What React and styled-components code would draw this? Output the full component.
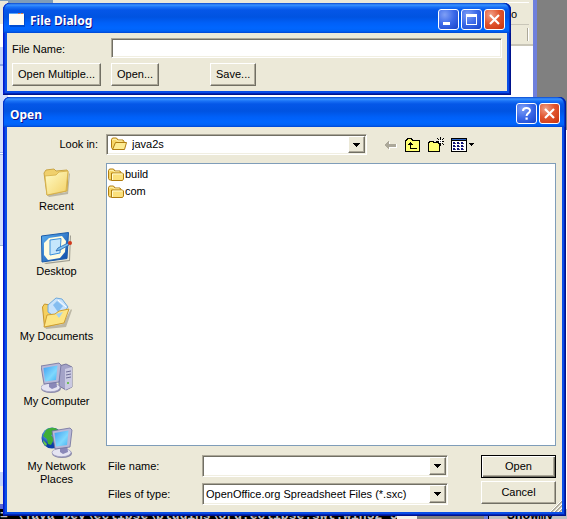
import React, { useState } from 'react';
import styled, { createGlobalStyle, css } from 'styled-components';

const GlobalStyle = createGlobalStyle`
  * {
    box-sizing: border-box;
  }

  body {
    margin: 0;
    overflow: hidden;
    background: #ece9d8;
    color: #000;
    font-family: Tahoma, "Liberation Sans", sans-serif;
    font-size: 11px;
    line-height: 13px;
  }

  button, input, select {
    font: inherit;
    color: inherit;
    border-radius: 0;
  }

  svg {
    display: block;
    flex: none;
  }
`;

const Desktop = styled.div`
  position: relative;
  display: flex;
  flex-direction: column;
  gap: 2px;
  height: 100vh;
  padding: 3px 1px 3px 3px;
  overflow: hidden;
`;

/* ---------- what shows behind the dialogs ---------- */

const Backdrop = styled.div`
  position: absolute;
  inset: 0;
  z-index: 0;
  display: flex;
  flex-direction: column;
`;

const Behind = styled.div`
  flex: 1;
  display: flex;
  background: #fff;
`;

const LeftStrip = styled.div`
  width: 8px;
  background: linear-gradient(
    #7f9db9 0 1px, #ece9d8 1px 24px, #fff 24px 47px, #c2d3fc 47px 64px,
    #8ba3e6 64px 66px, #d3defb 66px 152px, #9cb4ee 152px 153px,
    #fff 153px 154px, #9cb4ee 154px 155px, #d3defb 155px 245px,
    #9db8d8 245px 246px, #fff 246px 472px, #c2d3fc 472px 486px,
    #ece9d8 486px 504px, #5a66d0 504px
  );
`;

const BehindMain = styled.div`
  flex: 1;
  height: 3px;
  background: linear-gradient(90deg, #7f9db9 45px, #ece9d8 45px);
`;

const BehindTools = styled.div`
  width: 28px;
  height: 46px;
  display: flex;
  flex-direction: column;
  align-items: flex-end;
  padding: 2px 4px 0 0;
  background: #ece9d8;
  border-bottom: 2px solid #c9c6b8;
`;

const BehindLetter = styled.span`
  width: 100%;
  height: 23px;
  padding: 5px 12px 0 0;
  text-align: right;
  line-height: 13px;
  border-bottom: 1px solid #c9c6b8;
  border-top: 1px solid #fff;
`;

const BehindSeparator = styled.i`
  width: 2px;
  height: 13px;
  margin-top: 3px;
  background: #aca899;
  border-right: 1px solid #fff;
`;

const BehindEdge = styled.div`
  width: 34px;
  height: 130px;
  background: #808080;
  border-left: 4px solid #6f80dc;
`;

const Console = styled.div`
  display: flex;
  height: 10px;
  line-height: 14px;
  overflow: hidden;
  font-family: "Liberation Mono", monospace;
  font-size: 13px;
  font-weight: bold;
  white-space: pre;
`;

const ConsoleText = styled.span`
  width: 397px;
  background: #000;
  color: #c0c0c0;
`;

const ConsoleGap = styled.span`
  flex: 1;
  background: linear-gradient(90deg, #f4f1ea 20px, #808080 20px);
  border-right: 4px solid #6f80dc;
`;

const ConsoleSide = styled.span`
  width: 79px;
  padding-left: 18px;
  background: #c0c0c0;
  border-left: 1px solid #000;
`;

/* ---------- window frame ---------- */

const WindowFrame = styled.section`
  position: relative;
  z-index: 1;
  display: flex;
  flex-direction: column;
  padding: 0 4px 4px;
  background: #0a4ee6;
  border-radius: 7px 7px 0 0;
  box-shadow: inset -1px -1px #00138c, inset 1px 0 #0019cf,
    inset -2px -2px #0025b8, inset 2px 0 #0831d9;
  ${(p) => (p.$grow ? css`flex: 1; min-height: 0;` : css`margin-right: 55px;`)}
`;

const TitleBar = styled.header`
  display: flex;
  align-items: center;
  gap: 2px;
  height: 30px;
  margin: 0 -4px;
  padding: 3px 6px 0 ${(p) => (p.$icon ? '6px' : '7px')};
  border-radius: 7px 7px 0 0;
  background: linear-gradient(
    #0a48cf 0, #3a93ff 2px, #1a72f6 4px, #0557e8 7px, #0053e1 14px,
    #0060f8 20px, #0066ff 25px, #0062f6 28px, #0046d2 30px
  );
  box-shadow: inset 1px 0 #0030c8, inset -1px 0 #001a9c, inset -2px 0 #0038cc;
`;

const TitleText = styled.h1`
  flex: 1;
  margin: 0;
  padding: 2px 0 0 ${(p) => (p.$icon ? '3px' : '0')};
  color: #fff;
  font-family: "Trebuchet MS", "Noto Sans", sans-serif;
  font-size: 12px;
  font-weight: bold;
  line-height: 18px;
  text-shadow: 1px 1px #0f1089;
`;

const TitleButton = styled.button`
  width: 21px;
  height: 21px;
  padding: 0;
  border: 1px solid #fff;
  border-radius: 3px;
  background: ${(p) =>
    p.$close
      ? 'radial-gradient(circle at 30% 25%, #f0a088, #e2562f 45%, #c8320f)'
      : 'radial-gradient(circle at 30% 25%, #7f9ff5, #3a68e8 50%, #1743c8)'};
`;

const Body = styled.div`
  background: #ece9d8;
`;

/* ---------- controls ---------- */

const sunken = css`
  border: 1px solid;
  border-color: #aca899 #fff #fff #aca899;
  box-shadow: inset 1px 1px #716f64, inset -1px -1px #f1efe2;
  background: #fff;
`;

const raised = css`
  border: 1px solid;
  border-color: #fff #716f64 #716f64 #fff;
  box-shadow: inset -1px -1px #aca899;
  background: #ece9d8;
`;

const Button = styled.button`
  ${raised}
  height: 23px;
  padding: 0 5px;
  justify-self: ${(p) => (p.$fill ? 'stretch' : 'start')};
  white-space: nowrap;
  ${(p) =>
    p.$wide &&
    css`
      width: 75px;
    `}
  ${(p) =>
    p.$primary &&
    css`
      border-color: #000;
      box-shadow: inset 1px 1px #fff, inset -1px -1px #716f64,
        inset -2px -2px #aca899;
    `}
`;

const TextInput = styled.input`
  ${sunken}
  width: 100%;
  min-width: 0;
  height: 20px;
  padding: 0 4px;
  outline: none;
`;

const Combo = styled.div`
  ${sunken}
  position: relative;
  display: flex;
  align-items: center;
  flex: 1;
  height: ${(p) => (p.$short ? '21px' : '22px')};
  padding: 1px;
`;

const comboField = css`
  flex: 1;
  min-width: 0;
  height: 100%;
  border: 0;
  outline: none;
  background: transparent;
  appearance: none;
`;

const ComboSelect = styled.select`
  ${comboField}
  padding: 0 20px 0 ${(p) => (p.$icon ? '24px' : '2px')};
`;

const ComboInput = styled.input`
  ${comboField}
  padding: 0 20px 0 2px;
`;

const ComboArrow = styled.span`
  ${raised}
  position: absolute;
  top: 1px;
  right: 1px;
  bottom: 1px;
  width: 17px;
  display: flex;
  align-items: center;
  justify-content: center;
  pointer-events: none;
`;

const ComboIcon = styled.span`
  position: absolute;
  left: 4px;
  top: 1px;
  pointer-events: none;
`;

/* ---------- first window ---------- */

const FileForm = styled(Body)`
  display: grid;
  grid-template-columns: 89px 89px 1fr;
  gap: 5px 10px;
  align-items: center;
  padding: 5px;
`;

const FormLabel = styled.label`
  padding-top: 2px;
`;

const InputCell = styled.div`
  grid-column: 2 / -1;
  display: flex;
`;

/* ---------- open dialog ---------- */

const OpenBody = styled(Body)`
  flex: 1;
  position: relative;
  display: grid;
  grid-template-columns: 99px minmax(0, 1fr);
  grid-template-rows: auto minmax(0, 1fr);
  row-gap: 8px;
  padding: 7px 6px 7px 0;
`;

const LookLabel = styled.label`
  align-self: center;
  padding-right: 8px;
  text-align: right;
`;

const LookRow = styled.div`
  display: flex;
  align-items: center;
`;

const Toolbar = styled.div`
  display: flex;
  align-items: center;
  gap: 7px;
  width: 189px;
  padding-left: 17px;
`;

const ToolButton = styled.button`
  display: flex;
  align-items: center;
  gap: 2px;
  padding: 0;
  border: 0;
  background: none;
`;

const Places = styled.nav`
  display: flex;
  flex-direction: column;
  gap: 19px;
  padding-top: 4px;
`;

const Place = styled.button`
  display: flex;
  flex-direction: column;
  align-items: center;
  gap: 1px;
  padding: 0 12px;
  border: 0;
  background: none;
`;

const Content = styled.div`
  display: flex;
  flex-direction: column;
  gap: 9px;
  min-height: 0;
`;

const FileList = styled.ul`
  flex: 1;
  min-height: 0;
  margin: 0;
  padding: 2px 1px;
  list-style: none;
  background: #fff;
  border: 1px solid #7f9db9;
`;

const FileItem = styled.li`
  display: flex;
  align-items: center;
  gap: 1px;
  height: 17px;
`;

const Fields = styled.div`
  display: flex;
  gap: 33px;
`;

const FieldRows = styled.div`
  flex: 1;
  display: flex;
  flex-direction: column;
  gap: 6px;
`;

const FieldRow = styled.div`
  display: flex;
  align-items: center;
`;

const FieldLabel = styled.label`
  width: 96px;
  padding-left: 2px;
`;

const Actions = styled.div`
  display: flex;
  flex-direction: column;
  gap: 3px;
`;

const Grip = styled.span`
  position: absolute;
  right: 0;
  bottom: 0;
`;

/* ---------- icons ---------- */

const Arrow = () => (
  <svg width="7" height="4" shapeRendering="crispEdges">
    <path d="M0 0h7v1h-1v1h-1v1h-1v1h-1v-1h-1v-1h-1v-1h-1z" fill="#000" />
  </svg>
);

const AppIcon = () => (
  <svg width="16" height="16">
    <rect x="1" y="2" width="15" height="13" fill="#0038a8" opacity=".5" />
    <rect x="0" y="1" width="15" height="12" fill="#fffdf5" />
    <rect x="0" y="1" width="15" height="1" fill="#5aa5f5" />
    <path d="M9 1h2v1h-2zM12 1h2v1h-2z" fill="#e07848" />
  </svg>
);

const MinIcon = () => (
  <svg width="19" height="19">
    <rect x="4" y="12" width="7" height="3" fill="#fff" />
  </svg>
);

const MaxIcon = () => (
  <svg width="19" height="19" shapeRendering="crispEdges">
    <path d="M4 4h11v11H4zM5 7v7h9V7z" fill="#fff" fillRule="evenodd" />
  </svg>
);

const CloseIcon = () => (
  <svg width="19" height="19">
    <path d="M5 5l9 9M14 5l-9 9" stroke="#fff" strokeWidth="2.2" />
  </svg>
);

const HelpIcon = () => (
  <svg width="19" height="19">
    <path d="M6 7c0-4 7-4 7-.5 0 2.700-3.400 2.600-3.400 5.500" fill="none" stroke="#fff" strokeWidth="2" />
    <rect x="8.500" y="13.500" width="2.200" height="2.200" fill="#fff" />
  </svg>
);

const SmallFolder = ({ open }) => (
  <svg width="16" height="16">
    <path d="M.5 11.500v-8l1-1.500h4l1.500 2h5l1 1.500v6l-1 1.500h-10.500z" fill="#f7d768" stroke="#b07d10" />
    <path d="M1.500 4.500l.7-1.200h2.900l1.300 1.700h5" fill="none" stroke="#fff3b5" />
    {open ? (
      <path d="M1.500 13.500l3-7h11l-2 7z" fill="#fdeb91" stroke="#b07d10" />
    ) : (
      <>
        <path d="M3.500 13.500v-7.500h11l1 1v5l-1 1.500z" fill="#fbe07c" stroke="#b07d10" />
        <path d="M4.500 13v-6h10" fill="none" stroke="#fffbd0" />
      </>
    )}
  </svg>
);

const BackIcon = () => (
  <svg width="14" height="12" shapeRendering="crispEdges">
    <path d="M1 7l5-5v3h7v4h-7v3z" fill="#fff" />
    <path d="M0 6l5-5v3.500h7v3h-7v3.500z" fill="#aca899" />
  </svg>
);

const UpIcon = () => (
  <svg width="16" height="14" shapeRendering="crispEdges">
    <path d="M.5 13.500v-11h1v-1h1v-1h4v1h1v1h7v11z" fill="#ffff73" stroke="#000" />
    <path d="M5 4h1v1h1v1h1v1h-2v3h6v1h-7v-4h-2v-1h1v-1h1z" fill="#000" />
  </svg>
);

const NewFolderIcon = () => (
  <svg width="16" height="16" shapeRendering="crispEdges">
    <path d="M.5 14.500v-9h1v-1h4v1h6v9z" fill="#ffff73" stroke="#000" />
    <path d="M12 0h1v3h-1zM12 6h1v3h-1zM8 4h3v1h-3zM14 4h2v1h-2zM9 1h1v1h-1zM10 2h1v1h-1zM15 1h1v1h-1zM14 2h1v1h-1zM10 6h1v1h-1zM14 6h1v1h-1zM15 7h1v1h-1z" fill="#000" />
    <path d="M11 3h3v3h-3z" fill="#fff" />
    <path d="M12 4h1v1h-1z" fill="#555" />
  </svg>
);

const ViewIcon = () => (
  <svg width="16" height="14" shapeRendering="crispEdges">
    <rect x=".5" y=".5" width="15" height="13" fill="#fff" stroke="#000" />
    <path d="M1 1h14v1H1z" fill="#2b62c4" />
    <path d="M1 2h14v1H1z" fill="#000" />
    {[2, 6, 10].map((x) =>
      [4, 7, 10].map((y) => (
        <g key={`${x}-${y}`}>
          <rect x={x} y={y} width="2" height="2" fill="#10107c" />
          <rect x={x + 2} y={y + 1} width="1" height="1" fill="#555" />
        </g>
      ))
    )}
  </svg>
);

const RecentIcon = () => (
  <svg width="32" height="32">
    <defs>
      <linearGradient id="recent" x1="0" y1="0" x2="1" y2="1">
        <stop offset="0" stopColor="#fffcc8" />
        <stop offset="1" stopColor="#f3d166" />
      </linearGradient>
    </defs>
    <path d="M6 28l20-3 2-19 1 1-2 20-19 3z" fill="#8c8672" opacity=".5" />
    <path d="M3 6l2-3 8-1 2 2 11-1 1 2-1 19-20 4z" fill="#f0d06c" stroke="#c9a545" />
    <path d="M4 9l11-1 3-3 9-1-2 20-19 4z" fill="url(#recent)" stroke="#d5ae45" strokeWidth=".8" />
  </svg>
);

const DesktopIcon = () => (
  <svg width="32" height="32">
    <defs>
      <linearGradient id="desk" x1="0" y1="0" x2="1" y2="1">
        <stop offset="0" stopColor="#5db0f0" />
        <stop offset="1" stopColor="#0c4aa8" />
      </linearGradient>
    </defs>
    <path d="M3 31l25-3 1-25 1 1-1 25-24 3z" fill="#6c6a60" opacity=".6" />
    <path d="M.5 4l27-3.500-1.500 26-25 3.500z" fill="url(#desk)" stroke="#1b5ba9" />
    <path d="M8 6l13-2 4 5-1 11-5 6-12 2-4-5 0-12z" fill="#fffce0" />
    <path d="M9 8l11-1.500-1 14.500-10 2z" fill="#c5e6fc" stroke="#3a8fdc" />
    <path d="M17 16l10-5 1 2-9 5-4 1z" fill="#7ec3f3" stroke="#2565ad" strokeWidth=".8" />
    <circle cx="29" cy="11" r="2" fill="#d0381c" />
  </svg>
);

const DocumentsIcon = () => (
  <svg width="32" height="32">
    <path d="M4 30l18-3 8-15 1 1-6 17-20 2z" fill="#8c8672" opacity=".5" />
    <path d="M1.500 10l2-3 5 1 2 3 12-1-1 16-18 4z" fill="#f5cf5d" stroke="#c6962c" />
    <path d="M7 8l8-7 6 1 6 8-10 12-10-7z" fill="#c7e2fb" stroke="#6ea9dc" />
    <path d="M12 8l4-4 6 5-5 6z" fill="#84bdf0" />
    <path d="M17 3l8 7" stroke="#fff" />
    <path d="M3 30l3-12 8-1 4-3 10-2-5 14z" fill="#fde584" stroke="#cf9f34" />
    <path d="M15 17l7-2-4 6z" fill="#a5d2f3" />
  </svg>
);

const Monitor = ({ x, y }) => (
  <g transform={`translate(${x} ${y})`}>
    <ellipse cx="10" cy="25.500" rx="10" ry="4.500" fill="#8a89a8" />
    <ellipse cx="9.500" cy="24.500" rx="9.500" ry="4.200" fill="#e5e4f2" stroke="#9b9abf" strokeWidth=".7" />
    <path d="M8 18l7-1 1 7-5 2-3-2z" fill="#8a88b8" />
    <path d="M0 3l18-3 2 2-2 17-15 2z" fill="#b9b9d8" stroke="#6f6e9c" strokeWidth=".8" />
    <path d="M2.500 5l14-2.500-1.500 14.500-11 1.500z" fill="url(#screen)" />
  </g>
);

const ScreenFill = () => (
  <defs>
    <linearGradient id="screen" x1="0" y1="0" x2="1" y2="1">
      <stop offset="0" stopColor="#3f9ff2" />
      <stop offset=".6" stopColor="#7fd8fd" />
      <stop offset="1" stopColor="#46b4f4" />
    </linearGradient>
  </defs>
);

const ComputerIcon = () => (
  <svg width="32" height="32">
    <ScreenFill />
    <path d="M18 4l7-2 6 3v20l-6 3-7-4z" fill="#a4a3c8" stroke="#66658f" strokeWidth=".8" />
    <path d="M24 7l7-2v20l-7 3z" fill="#cac9e2" />
    <path d="M25 10l5-1M25 13l5-1M25 16l5-1" stroke="#6e6d98" />
    <rect x="26" y="20" width="2" height="2" fill="#6fc05a" />
    <Monitor x={0} y={1} />
  </svg>
);

const NetworkIcon = () => (
  <svg width="32" height="32">
    <defs>
      <radialGradient id="globe" cx=".35" cy=".3">
        <stop offset="0" stopColor="#7dc8fb" />
        <stop offset="1" stopColor="#0a3fa8" />
      </radialGradient>
    </defs>
    <circle cx="11" cy="11" r="10.500" fill="url(#globe)" />
    <path d="M5 3c4-3 9-3 12 0l-3 4-4 1 3 4-3 6-3-1-1-5-4-3z" fill="#3fae38" />
    <path d="M2 13l4 4-1 2c-2-1-3-4-3-6z" fill="#67c84a" />
    <Monitor x={11} y={1} />
  </svg>
);

const GripIcon = () => (
  <svg width="12" height="12">
    <path d="M1 12L12 1M5 12l7-7M9 12l3-3" stroke="#aca899" strokeWidth="2" />
    <path d="M0 12L12 0M4 12l8-8M8 12l4-4" stroke="#fff" />
  </svg>
);

const places = [
  { name: 'Recent', icon: RecentIcon },
  { name: 'Desktop', icon: DesktopIcon },
  { name: 'My Documents', icon: DocumentsIcon },
  { name: 'My Computer', icon: ComputerIcon },
  { name: 'My Network Places', icon: NetworkIcon },
];

const folders = ['build', 'com'];

function FileDialogWindow() {
  const [fileName, setFileName] = useState('');

  return (
    <WindowFrame>
      <TitleBar $icon>
        <AppIcon />
        <TitleText $icon>File Dialog</TitleText>
        <TitleButton aria-label="Minimize"><MinIcon /></TitleButton>
        <TitleButton aria-label="Maximize"><MaxIcon /></TitleButton>
        <TitleButton $close aria-label="Close"><CloseIcon /></TitleButton>
      </TitleBar>
      <FileForm>
        <FormLabel htmlFor="file-name">File Name:</FormLabel>
        <InputCell>
          <TextInput id="file-name" value={fileName} onChange={(e) => setFileName(e.target.value)} />
        </InputCell>
        <Button $fill>Open Multiple...</Button>
        <Button>Open...</Button>
        <Button>Save...</Button>
      </FileForm>
    </WindowFrame>
  );
}

function OpenWindow() {
  const [name, setName] = useState('');

  return (
    <WindowFrame $grow>
      <TitleBar>
        <TitleText>Open</TitleText>
        <TitleButton aria-label="Help"><HelpIcon /></TitleButton>
        <TitleButton $close aria-label="Close"><CloseIcon /></TitleButton>
      </TitleBar>
      <OpenBody>
        <LookLabel htmlFor="look-in">Look in:</LookLabel>
        <LookRow>
          <Combo $short>
            <ComboIcon><SmallFolder open /></ComboIcon>
            <ComboSelect id="look-in" $icon>
              <option>java2s</option>
            </ComboSelect>
            <ComboArrow><Arrow /></ComboArrow>
          </Combo>
          <Toolbar>
            <ToolButton aria-label="Back" disabled><BackIcon /></ToolButton>
            <ToolButton aria-label="Up one level"><UpIcon /></ToolButton>
            <ToolButton aria-label="New folder"><NewFolderIcon /></ToolButton>
            <ToolButton aria-label="Views">
              <ViewIcon />
              <svg width="5" height="3" shapeRendering="crispEdges">
                <path d="M0 0h5v1h-1v1h-1v1h-1v-1h-1v-1h-1z" />
              </svg>
            </ToolButton>
          </Toolbar>
        </LookRow>

        <Places>
          {places.map(({ name: label, icon: Icon }) => (
            <Place key={label}>
              <Icon />
              {label}
            </Place>
          ))}
        </Places>

        <Content>
          <FileList>
            {folders.map((folder) => (
              <FileItem key={folder}>
                <SmallFolder />
                {folder}
              </FileItem>
            ))}
          </FileList>
          <Fields>
            <FieldRows>
              <FieldRow>
                <FieldLabel htmlFor="open-name">File name:</FieldLabel>
                <Combo>
                  <ComboInput id="open-name" value={name} onChange={(e) => setName(e.target.value)} />
                  <ComboArrow><Arrow /></ComboArrow>
                </Combo>
              </FieldRow>
              <FieldRow>
                <FieldLabel htmlFor="open-type">Files of type:</FieldLabel>
                <Combo>
                  <ComboSelect id="open-type">
                    <option>OpenOffice.org Spreadsheet Files (*.sxc)</option>
                  </ComboSelect>
                  <ComboArrow><Arrow /></ComboArrow>
                </Combo>
              </FieldRow>
            </FieldRows>
            <Actions>
              <Button $wide $primary>Open</Button>
              <Button $wide>Cancel</Button>
            </Actions>
          </Fields>
        </Content>
        <Grip><GripIcon /></Grip>
      </OpenBody>
    </WindowFrame>
  );
}

function App() {
  return (
    <>
      <GlobalStyle />
      <Desktop>
        <Backdrop>
          <Behind>
            <LeftStrip />
            <BehindMain />
            <BehindTools>
              <BehindLetter>o</BehindLetter>
              <BehindSeparator />
            </BehindTools>
            <BehindEdge />
          </Behind>
          <Console>
            <ConsoleText>{'= \\java_Dev\\eclipse\\plugins\\org.eclipse.swt.win32_3'}</ConsoleText>
            <ConsoleGap />
            <ConsoleSide>Showmy</ConsoleSide>
          </Console>
        </Backdrop>
        <FileDialogWindow />
        <OpenWindow />
      </Desktop>
    </>
  );
}

export default App;
